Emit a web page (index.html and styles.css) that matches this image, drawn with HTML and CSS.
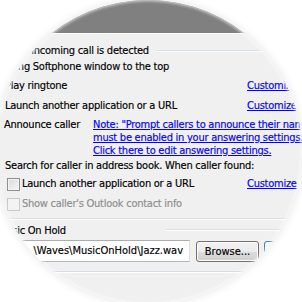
FILE: index.html
```html
<!DOCTYPE html>
<html>
<head>
<meta charset="utf-8">
<link rel="stylesheet" href="styles.css">
</head>
<body>
<div class="lens">
  <div class="band"></div>
  <div class="content">
    <div class="gtitle"><span class="gt-text">When incoming call is detected</span><span class="gline"></span></div>
    <div class="opt r2"><span>Bring Softphone window to the top</span></div>
    <div class="opt r3"><span>Play ringtone</span><a class="link">Customize</a></div>
    <div class="opt r4"><span>Launch another application or a URL</span><a class="link">Customize</a></div>
    <div class="announce">
      <span class="ann-label">Announce caller</span>
      <a class="link note">Note: "Prompt callers to announce their name" option<br>must be enabled in your answering settings.<br>Click there to edit answering settings.</a>
    </div>
    <div class="search">Search for caller in address book. When caller found:</div>
    <div class="opt r7"><span class="cbrow"><span class="cb"></span><span>Launch another application or a URL</span></span><a class="link">Customize</a></div>
    <div class="opt r8"><span class="cbrow disabled"><span class="cb cb-dis"></span><span>Show caller's Outlook contact info</span></span></div>
    <div class="gsep"></div>
    <div class="gtitle2"><span class="gt-text">Music On Hold</span><span class="gline2"></span></div>
    <div class="filerow">
      <div class="field">\Waves\MusicOnHold\Jazz.wav</div>
      <div class="btn">Browse...</div>
      <div class="btn btn-focus"></div>
    </div>
    <div class="gsep bottom"></div>
  </div>
</div>
</body>
</html>
```
FILE: styles.css
```css
html, body {
  margin: 0;
  padding: 0;
  background: #ffffff;
  overflow: hidden;
}
body {
  width: 302px;
  height: 302px;
}
.lens {
  position: relative;
  width: 308px;
  height: 304px;
  margin-left: -6px;
  border-radius: 50%;
  overflow: hidden;
  background: #f0f0f0;
  box-shadow: 0 0 6px 3px rgba(0, 0, 0, 0.06);
  font-family: "DejaVu Sans Condensed", "DejaVu Sans", sans-serif;
  font-size: 11px;
  letter-spacing: -0.25px;
  color: #000;
  -webkit-text-stroke: 0.15px currentColor;
}
.lens::after {
  content: "";
  position: absolute;
  inset: 0;
  border-radius: 50%;
  box-shadow: inset 0 0 3px 1px rgba(255, 255, 255, 0.7);
  pointer-events: none;
}
.band {
  height: 33px;
  background: #808080;
  border-bottom: 1px solid #ffffff;
}
.content {
  padding-left: 11px;
}
.gtitle {
  display: flex;
  align-items: center;
  margin-top: 9px;
  height: 15px;
  line-height: 15px;
  margin-left: -4px;
  white-space: nowrap;
}
.gline {
  flex: 1;
  margin-left: 7px;
  border-top: 1px solid #d5dfe5;
  border-bottom: 1px solid #ffffff;
}
.opt {
  display: grid;
  grid-template-columns: 242px auto;
  white-space: nowrap;
}
.r2 { line-height: 17px; }
.r3 { line-height: 21px; }
.r4 { line-height: 19px; }
.r7 { line-height: 20px; }
.r8 { line-height: 20px; }
.link {
  color: #0000ff;
  text-decoration: underline;
  white-space: nowrap;
}
.announce {
  display: grid;
  grid-template-columns: 89px auto;
  margin-left: -1px;
  padding-top: 3px;
  line-height: 13px;
  white-space: nowrap;
}
.search {
  line-height: 17px;
  white-space: nowrap;
}
.cbrow {
  display: flex;
  align-items: center;
  gap: 2px;
  margin-left: 2px;
}
.cb {
  width: 11px;
  height: 11px;
  border: 1px solid #8e8f8f;
  background: linear-gradient(135deg, #d9d9d9, #f7f7f7);
  box-shadow: inset 0 0 0 1px #f4f4f4;
  flex: none;
}
.cb-dis {
  border-color: #c9c9c9;
  background: #f3f3f3;
  box-shadow: none;
}
.disabled {
  color: #8d8d8d;
}
.gsep {
  margin-top: 4px;
  margin-left: -11px;
  border-top: 1px solid #d5dfe5;
  border-bottom: 1px solid #ffffff;
}
.gsep.bottom {
  margin-top: 9px;
}
.gtitle2 {
  display: flex;
  align-items: center;
  margin-top: 3px;
  height: 16px;
  line-height: 16px;
  margin-left: -7px;
  white-space: nowrap;
}
.gline2 {
  flex: 1;
  margin-left: 100px;
  margin-top: -3px;
  border-top: 1px solid #d5dfe5;
  border-bottom: 1px solid #ffffff;
}
.filerow {
  display: flex;
  align-items: flex-start;
  margin-top: 1px;
  margin-left: -11px;
}
.field {
  width: 188px;
  height: 20px;
  line-height: 20px;
  padding-right: 6px;
  background: #ffffff;
  border: 1px solid #b5b8c0;
  border-top-color: #abadb3;
  border-right-color: #dbdfe6;
  text-align: right;
  letter-spacing: 0;
  white-space: nowrap;
  overflow: hidden;
  flex: none;
}
.btn {
  flex: none;
  margin-top: 1px;
  margin-left: 6px;
  width: 61px;
  height: 19px;
  line-height: 19px;
  text-align: center;
  letter-spacing: 0;
  border: 1px solid #707070;
  border-radius: 3px;
  background: linear-gradient(#f2f2f2 0%, #ebebeb 50%, #dddddd 51%, #cfcfcf 100%);
  box-shadow: inset 0 0 0 1px #fcfcfc;
}
.btn-focus {
  margin-left: 5px;
  border-color: #3c7fb1;
  background: linear-gradient(#f2f8fc 0%, #e8f2fa 100%);
}
```
